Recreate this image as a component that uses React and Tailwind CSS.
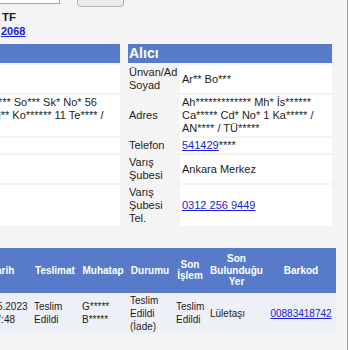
const BLUE = 'bg-[#587bc9]';

function InfoRow({ left, label, children }) {
  return (
    <>
      <div className="bg-white pl-[2px] py-[1px] overflow-hidden whitespace-nowrap">{left}</div>
      <div className="pl-[9px] py-[1px] flex items-center">{label}</div>
      <div className="bg-white pl-[2px] py-[1px] flex items-center">
        <div>{children}</div>
      </div>
    </>
  );
}

export default function App() {
  return (
    <div className="w-[350px] h-[350px] overflow-hidden bg-white font-['Liberation_Sans',Arial,sans-serif] text-[#1c1c1c]">
      <div className="w-[348px] h-full overflow-hidden bg-[#f4f4f4] border-r border-[#9c9c9c]">
        {/* page is cropped: content starts left of and above the view */}
        <div className="w-[396px] -ml-[60px] -mt-[14px]">
          {/* search row */}
          <div className="flex items-start">
            <div className="w-[120px] h-[18px] bg-white border border-[#a3a3a3]" />
            <div className="ml-[17px] w-[47px] h-[21px] bg-[#ececec] border border-[#b0b0b0] rounded-b-[4px]" />
          </div>

          <div className="mt-[3px] pl-[62px] text-[11.5px] leading-[14px] font-bold">TF</div>
          <div className="pl-[61px] text-[11px] leading-[14px] font-bold">
            <a href="#" className="text-[#2020dd] underline">2068</a>
          </div>

          {/* sender / receiver */}
          <div className="mt-[6px] grid grid-cols-[180px_60px_152px] gap-y-[2px] text-[11px] leading-[13px]">
            <div className={`h-[19px] ${BLUE}`} />
            <div className={`col-span-2 ml-[8px] h-[19px] ${BLUE} pl-[1px] text-white font-bold text-[14px] leading-[19px]`}>
              Alıcı
            </div>

            <InfoRow label={<span>Ünvan/Ad<br />Soyad</span>}>Ar** Bo***</InfoRow>
            <InfoRow
              left={
                <>
                  <div>Ye* Mh* Ka*** So*** Sk* No* 56</div>
                  <div>Ak* Mh* Bal** Ko****** 11 Te**** /</div>
                </>
              }
              label="Adres"
            >
              Ah************* Mh* İs******<br />
              Ca***** Cd* No* 1 Ka***** /<br />
              AN**** / TÜ*****
            </InfoRow>
            <InfoRow label="Telefon">
              <a href="#" className="text-[#2020dd] underline">541429</a>****
            </InfoRow>
            <InfoRow label={<span>Varış<br />Şubesi</span>}>Ankara Merkez</InfoRow>
            <InfoRow label={<span>Varış<br />Şubesi<br />Tel.</span>}>
              <a href="#" className="text-[#2020dd] underline">0312 256 9449</a>
            </InfoRow>
          </div>

          {/* movements */}
          <table className="mt-[22px] w-[396px] table-fixed border-collapse text-[10px]">
            <colgroup>
              <col className="w-[34px]" />
              <col className="w-[57px]" />
              <col className="w-[48px]" />
              <col className="w-[48px]" />
              <col className="w-[46px]" />
              <col className="w-[34px]" />
              <col className="w-[59px]" />
              <col className="w-[70px]" />
            </colgroup>
            <thead>
              <tr className={`${BLUE} text-white font-bold leading-[11.5px]`}>
                <th className="px-[2px] py-[5px] text-center align-middle">Birim</th>
                <th className="px-[2px] py-[5px] text-center align-middle">Tarih</th>
                <th className="px-[2px] py-[5px] text-center align-middle">Teslimat</th>
                <th className="px-[2px] py-[5px] text-center align-middle">Muhatap</th>
                <th className="px-[2px] py-[5px] text-center align-middle">Durumu</th>
                <th className="px-[2px] py-[5px] text-center align-middle">Son İşlem</th>
                <th className="px-[2px] py-[5px] text-center align-middle">Son Bulunduğu Yer</th>
                <th className="px-[2px] py-[5px] text-center align-middle">Barkod</th>
              </tr>
            </thead>
            <tbody>
              <tr className="bg-[#eef0f7] leading-[13px]">
                <td className="px-[3px] py-[1px] align-middle"></td>
                <td className="px-[3px] py-[1px] align-middle text-center">26.05.2023<br />17:48</td>
                <td className="px-[3px] py-[1px] align-middle">Teslim Edildi</td>
                <td className="px-[3px] py-[1px] align-middle">G*****<br />B*****</td>
                <td className="px-[3px] py-[1px] align-middle">Teslim Edildi (İade)</td>
                <td className="px-[3px] py-[1px] align-middle">Teslim Edildi</td>
                <td className="px-[3px] py-[1px] align-middle">Lületaşı</td>
                <td className="px-[3px] py-[1px] align-middle text-center">
                  <a href="#" className="text-[#2020dd] underline">00883418742</a>
                </td>
              </tr>
            </tbody>
          </table>
        </div>
      </div>
    </div>
  );
}
